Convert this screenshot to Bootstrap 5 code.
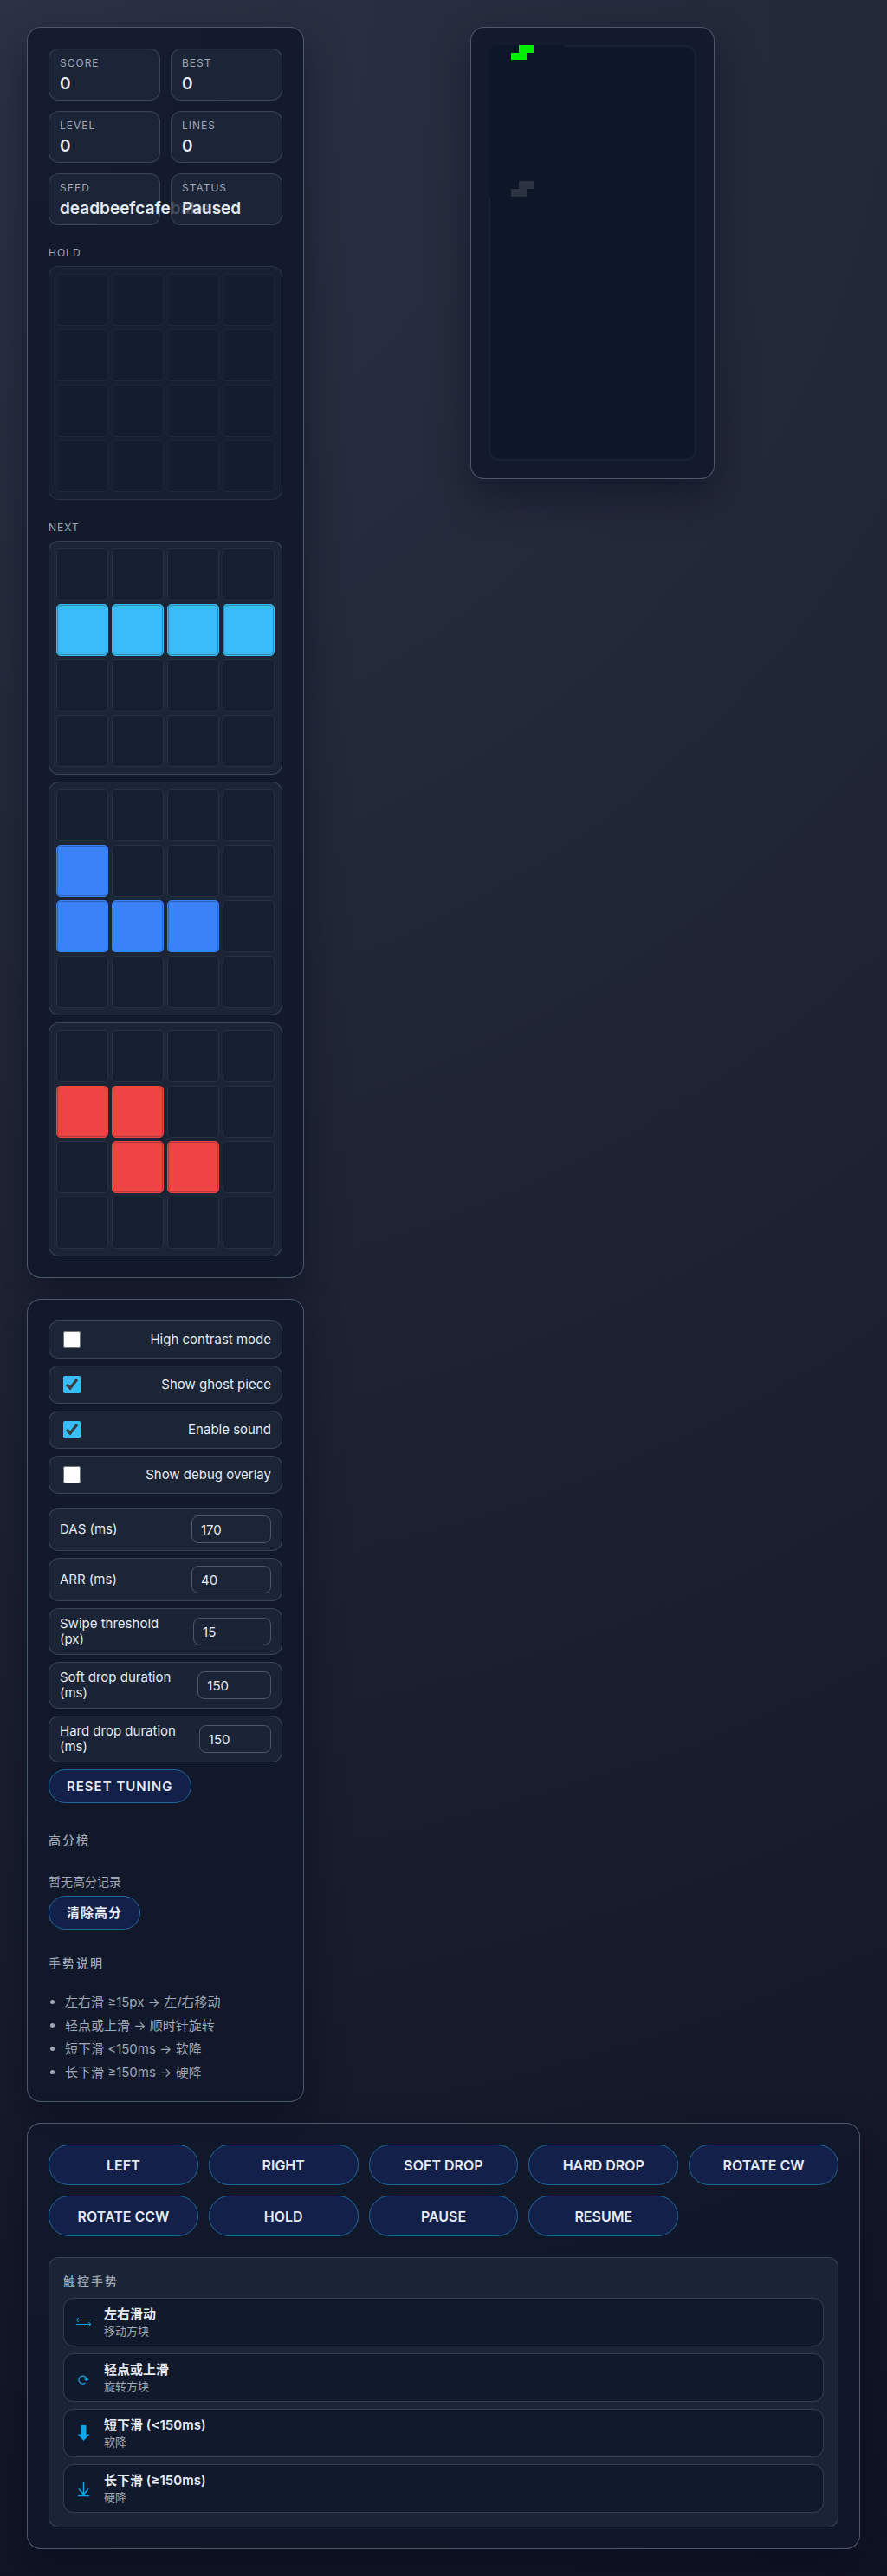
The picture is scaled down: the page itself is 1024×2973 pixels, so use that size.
<!DOCTYPE html>
<html lang="zh-CN" data-bs-theme="dark">
<head>
<meta charset="utf-8">
<meta name="viewport" content="width=device-width, initial-scale=1">
<title>Tetris</title>
<link href="https://cdn.jsdelivr.net/npm/bootstrap@5.3.0/dist/css/bootstrap.min.css" rel="stylesheet">
<style>
:root {
  --ink: #e5e9f0;
  --muted: #9fa7b4;
  --line: rgba(148, 163, 184, .25);
  --tile: rgba(30, 40, 58, .8);
}
body {
  min-height: 100vh;
  padding: 31px;
  color: var(--ink);
  font: 15px/18px Inter, "Noto Sans CJK SC", sans-serif;
  background: radial-gradient(circle at top left, #2c3244 0%, #101323 100%) no-repeat;
}
.game-shell { display: grid; grid-template-columns: 320px minmax(0, 1fr); gap: 24px; align-items: start; }
.full-row { grid-column: 1 / -1; }
.panel {
  padding: 24px;
  border: 1px solid rgba(148, 163, 184, .46);
  border-radius: 16px;
  background: rgba(16, 24, 42, .88);
  box-shadow: 0 20px 48px rgba(2, 6, 23, .42);
}
.board-panel { padding: 20px; }
.board { display: block; width: 240px; height: 480px; border-radius: 12px; background: #0e1728; }
.caption { font-size: 12px; line-height: 15px; letter-spacing: 1px; color: var(--muted); text-transform: uppercase; font-weight: 400; margin: 0; }
.tile { border: 1px solid var(--line); border-radius: 12px; background: var(--tile); }
.stats { display: grid; grid-template-columns: 1fr 1fr; gap: 12px; }
.stat { min-width: 0; height: 60px; padding: 8px 12px; }
.stat-value { font-size: 19px; line-height: 24px; font-weight: 600; margin-top: 5px; }
.mini { display: grid; grid-template-columns: repeat(4, 1fr); gap: 4px; padding: 8px; }
.mini i { aspect-ratio: 1; border: 1px solid rgba(148, 163, 184, .14); border-radius: 5px; background: rgba(15, 23, 42, .4); }
.mini .fill { border-color: var(--c); background: var(--c); box-shadow: inset 0 0 0 1px rgba(15, 23, 42, .3); }
.held-empty { opacity: .6; }
.cyan { --c: #38bdf8; }
.blue { --c: #3b82f6; }
.red { --c: #ef4444; }
.toggle { height: 44px; padding: 0 12px; }
.toggle input { width: 20px; height: 20px; margin: 0 4px; accent-color: #38bdf8; color-scheme: light; }
.tune { min-height: 50px; padding: 8px 12px; gap: 12px; }
.tune input {
  width: 92px; height: 32px; min-width: 0; padding: 0 10px;
  color: var(--ink); font-size: 15px;
  border: 1px solid rgba(148, 163, 184, .4); border-radius: 8px; background: transparent;
  appearance: textfield;
}
.tune input::-webkit-inner-spin-button { appearance: none; }
.pill {
  --bs-btn-color: var(--ink); --bs-btn-bg: #13204a; --bs-btn-border-color: #20689c;
  --bs-btn-hover-color: #fff; --bs-btn-hover-bg: #1b2c62; --bs-btn-hover-border-color: #38bdf8;
  --bs-btn-padding-y: 0; --bs-btn-padding-x: 20px;
  --bs-btn-font-size: 15px; --bs-btn-line-height: 18px; --bs-btn-font-weight: 600;
  height: 39px; border-radius: 24px; letter-spacing: 1px; text-transform: uppercase;
}
.controls { display: grid; grid-template-columns: repeat(auto-fit, minmax(160px, 1fr)); gap: 12px; }
.controls .pill { --bs-btn-font-size: 16px; --bs-btn-padding-x: 12px; height: 47px; letter-spacing: normal; }
.section-title { font-size: 14px; line-height: 22px; letter-spacing: 2px; color: var(--muted); font-weight: 500; margin: 0; }
.hint { font-size: 14px; line-height: 17px; color: var(--muted); }
.tips { padding-left: 19px; color: var(--muted); line-height: 19px; }
.gestures { padding: 16px; }
.gesture { height: 56px; padding: 0 12px; gap: 12px; border: 1px solid var(--line); border-radius: 12px; background: rgba(15, 23, 42, .85); }
.gesture svg { width: 22px; height: 22px; flex: none; fill: none; stroke: #0ea5e9; }
.gesture-text { display: grid; row-gap: 2px; }
.gesture strong { font-size: 15px; line-height: 19px; font-weight: 600; }
.gesture span { font-size: 13px; line-height: 17px; color: var(--muted); }
</style>
</head>
<body>
<main class="game-shell">
  <section class="panel">
    <div class="stats">
      <div class="tile stat"><p class="caption">Score</p><div class="stat-value">0</div></div>
      <div class="tile stat"><p class="caption">Best</p><div class="stat-value">0</div></div>
      <div class="tile stat"><p class="caption">Level</p><div class="stat-value">0</div></div>
      <div class="tile stat"><p class="caption">Lines</p><div class="stat-value">0</div></div>
      <div class="tile stat"><p class="caption">Seed</p><div class="stat-value">deadbeefcafebabe</div></div>
      <div class="tile stat position-relative"><p class="caption">Status</p><div class="stat-value">Paused</div></div>
    </div>
    <h2 class="caption mt-4 mb-2">Hold</h2>
    <div class="tile mini held-empty"><i></i><i></i><i></i><i></i><i></i><i></i><i></i><i></i><i></i><i></i><i></i><i></i><i></i><i></i><i></i><i></i></div>
    <h2 class="caption mt-4 mb-2">Next</h2>
    <div class="d-grid gap-2">
      <div class="tile mini cyan"><i></i><i></i><i></i><i></i><i class="fill"></i><i class="fill"></i><i class="fill"></i><i class="fill"></i><i></i><i></i><i></i><i></i><i></i><i></i><i></i><i></i></div>
      <div class="tile mini blue"><i></i><i></i><i></i><i></i><i class="fill"></i><i></i><i></i><i></i><i class="fill"></i><i class="fill"></i><i class="fill"></i><i></i><i></i><i></i><i></i><i></i></div>
      <div class="tile mini red"><i></i><i></i><i></i><i></i><i class="fill"></i><i class="fill"></i><i></i><i></i><i></i><i class="fill"></i><i class="fill"></i><i></i><i></i><i></i><i></i><i></i></div>
    </div>
  </section>

  <section class="panel board-panel mx-auto">
    <svg class="board" viewBox="0 0 240 480" role="img" aria-label="Board">
      <rect x="1" y="1" width="238" height="478" rx="11" fill="none" stroke="#1a2333" stroke-width="2"/>
      <path d="M0 0H87V175H0z" fill="#0e1728"/>
      <path d="M35 0H52V9H44V17H26V9H35z" fill="#00f000"/>
      <path d="M35 157H52V166H44V175H26V166H35z" fill="#2b3240"/>
    </svg>
  </section>

  <section class="panel">
    <div class="d-grid gap-2">
      <label class="tile toggle d-flex align-items-center justify-content-between"><input type="checkbox">High contrast mode</label>
      <label class="tile toggle d-flex align-items-center justify-content-between"><input type="checkbox" checked>Show ghost piece</label>
      <label class="tile toggle d-flex align-items-center justify-content-between"><input type="checkbox" checked>Enable sound</label>
      <label class="tile toggle d-flex align-items-center justify-content-between"><input type="checkbox">Show debug overlay</label>
    </div>
    <div class="d-grid gap-2 mt-3">
      <label class="tile tune d-flex align-items-center justify-content-between"><span>DAS (ms)</span><input type="number" value="170"></label>
      <label class="tile tune d-flex align-items-center justify-content-between"><span>ARR (ms)</span><input type="number" value="40"></label>
      <label class="tile tune d-flex align-items-center justify-content-between"><span>Swipe threshold (px)</span><input type="number" value="15"></label>
      <label class="tile tune d-flex align-items-center justify-content-between"><span>Soft drop duration (ms)</span><input type="number" value="150"></label>
      <label class="tile tune d-flex align-items-center justify-content-between"><span>Hard drop duration (ms)</span><input type="number" value="150"></label>
    </div>
    <button type="button" class="btn pill mt-2">Reset tuning</button>
    <h2 class="section-title mt-4 pt-2">高分榜</h2>
    <div class="hint mt-4 pt-1">暂无高分记录</div>
    <button type="button" class="btn pill mt-2">清除高分</button>
    <h2 class="section-title mt-4 pt-1">手势说明</h2>
    <ul class="tips d-grid gap-2 mt-4 mb-0">
      <li>左右滑 ≥15px → 左/右移动</li>
      <li>轻点或上滑 → 顺时针旋转</li>
      <li>短下滑 &lt;150ms → 软降</li>
      <li>长下滑 ≥150ms → 硬降</li>
    </ul>
  </section>

  <section class="panel full-row">
    <div class="controls">
      <button type="button" class="btn pill">Left</button>
      <button type="button" class="btn pill">Right</button>
      <button type="button" class="btn pill">Soft drop</button>
      <button type="button" class="btn pill">Hard drop</button>
      <button type="button" class="btn pill">Rotate CW</button>
      <button type="button" class="btn pill">Rotate CCW</button>
      <button type="button" class="btn pill">Hold</button>
      <button type="button" class="btn pill">Pause</button>
      <button type="button" class="btn pill">Resume</button>
    </div>
    <div class="tile gestures mt-4">
      <h2 class="section-title mb-2">触控手势</h2>
      <div class="d-grid gap-2">
        <div class="gesture d-flex align-items-center">
          <svg viewBox="0 0 22 22" aria-hidden="true"><path d="M19 8.500H2M5 6L2 8.500L5 11M2 13.500H19M16 11L19 13.500L16 16"/></svg>
          <div class="gesture-text"><strong>左右滑动</strong><span>移动方块</span></div>
        </div>
        <div class="gesture d-flex align-items-center">
          <svg viewBox="0 0 22 22" aria-hidden="true"><path d="M12.500 17A4.500 4.500 0 1 1 14 13.500M11.500 12.500L14 14.500L16 12.500" stroke-width="1.300"/></svg>
          <div class="gesture-text"><strong>轻点或上滑</strong><span>旋转方块</span></div>
        </div>
        <div class="gesture d-flex align-items-center">
          <svg viewBox="0 0 22 22" aria-hidden="true"><path d="M7.500 2H13.500V12.500H17.500L10.500 20L3.500 12.500H7.500z" fill="#0ea5e9" stroke="none"/></svg>
          <div class="gesture-text"><strong>短下滑 (&lt;150ms)</strong><span>软降</span></div>
        </div>
        <div class="gesture d-flex align-items-center">
          <svg viewBox="0 0 22 22" aria-hidden="true"><path d="M10.500 3V18.500M5 11.500L10.500 18L16 11.500M4 19.500H17" stroke-width="1.500"/></svg>
          <div class="gesture-text"><strong>长下滑 (≥150ms)</strong><span>硬降</span></div>
        </div>
      </div>
    </div>
  </section>
</main>
<script src="https://cdn.jsdelivr.net/npm/bootstrap@5.3.0/dist/js/bootstrap.bundle.min.js"></script>
</body>
</html>
